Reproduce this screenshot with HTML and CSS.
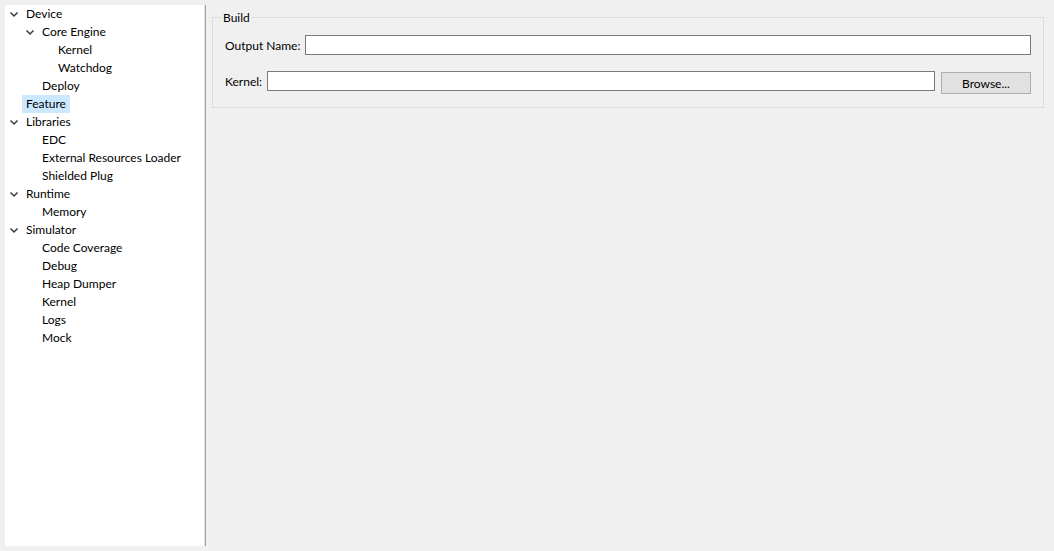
FILE: index.html
```html
<!DOCTYPE html>
<html lang="en">
<head>
    <meta charset="UTF-8">
    <title>Properties</title>
    <link rel="stylesheet" href="styles.css">
</head>
<body>
    <div class="tree-panel">
        <ul class="tree">
            <li>
                <div class="row"><span class="toggle"><svg viewBox="0 0 16 18"><polyline points="4.5,7.5 8,11 11.5,7.5"/></svg></span><span class="label">Device</span></div>
                <ul>
                    <li>
                        <div class="row"><span class="toggle"><svg viewBox="0 0 16 18"><polyline points="4.5,7.5 8,11 11.5,7.5"/></svg></span><span class="label">Core Engine</span></div>
                        <ul>
                            <li><div class="row"><span class="toggle"></span><span class="label">Kernel</span></div></li>
                            <li><div class="row"><span class="toggle"></span><span class="label">Watchdog</span></div></li>
                        </ul>
                    </li>
                    <li><div class="row"><span class="toggle"></span><span class="label">Deploy</span></div></li>
                </ul>
            </li>
            <li><div class="row"><span class="toggle"></span><span class="label selected">Feature</span></div></li>
            <li>
                <div class="row"><span class="toggle"><svg viewBox="0 0 16 18"><polyline points="4.5,7.5 8,11 11.5,7.5"/></svg></span><span class="label">Libraries</span></div>
                <ul>
                    <li><div class="row"><span class="toggle"></span><span class="label">EDC</span></div></li>
                    <li><div class="row"><span class="toggle"></span><span class="label">External Resources Loader</span></div></li>
                    <li><div class="row"><span class="toggle"></span><span class="label">Shielded Plug</span></div></li>
                </ul>
            </li>
            <li>
                <div class="row"><span class="toggle"><svg viewBox="0 0 16 18"><polyline points="4.5,7.5 8,11 11.5,7.5"/></svg></span><span class="label">Runtime</span></div>
                <ul>
                    <li><div class="row"><span class="toggle"></span><span class="label">Memory</span></div></li>
                </ul>
            </li>
            <li>
                <div class="row"><span class="toggle"><svg viewBox="0 0 16 18"><polyline points="4.5,7.5 8,11 11.5,7.5"/></svg></span><span class="label">Simulator</span></div>
                <ul>
                    <li><div class="row"><span class="toggle"></span><span class="label">Code Coverage</span></div></li>
                    <li><div class="row"><span class="toggle"></span><span class="label">Debug</span></div></li>
                    <li><div class="row"><span class="toggle"></span><span class="label">Heap Dumper</span></div></li>
                    <li><div class="row"><span class="toggle"></span><span class="label">Kernel</span></div></li>
                    <li><div class="row"><span class="toggle"></span><span class="label">Logs</span></div></li>
                    <li><div class="row"><span class="toggle"></span><span class="label">Mock</span></div></li>
                </ul>
            </li>
        </ul>
    </div>

    <div class="content">
        <fieldset class="group">
            <legend>Build</legend>
            <div class="field">
                <label for="output-name">Output Name:</label>
                <input type="text" id="output-name" class="text-input">
            </div>
            <div class="field kernel-field">
                <label for="kernel">Kernel:</label>
                <input type="text" id="kernel" class="text-input">
                <button class="btn">Browse...</button>
            </div>
        </fieldset>
    </div>
</body>
</html>
```

FILE: styles.css
```css
html, body {
    margin: 0;
    height: 100%;
}

body {
    font-family: Lato, "Noto Sans", sans-serif;
    font-size: 12px;
    color: #000;
    background: #f0f0f0;
    display: flex;
    overflow: hidden;
}

.tree-panel {
    width: 200px;
    margin: 5px 0 5px 5px;
    background: #fff;
    border-right: 1px solid #a0a0a0;
    box-shadow: inset -1px 0 #e3e3e3;
}

.tree,
.tree ul {
    list-style: none;
    margin: 0;
    padding: 0;
}

.tree {
    padding-left: 1px;
}

.tree ul {
    padding-left: 16px;
}

.row {
    display: flex;
    height: 18px;
}

.toggle {
    width: 16px;
    flex-shrink: 0;
}

.toggle svg {
    display: block;
    width: 16px;
    height: 18px;
    fill: none;
    stroke: #3a3a3a;
    stroke-width: 1.5;
}

.label {
    padding: 0 4px;
    line-height: 18px;
    white-space: nowrap;
}

.label.selected {
    background: #cce8ff;
}

.content {
    flex: 1;
    padding: 9px 10px 0 6px;
}

.group {
    margin: 0;
    padding: 9px 12px 13px 12px;
    border: 1px solid #dcdcdc;
}

.group legend {
    padding: 0 2px;
    margin-left: -4px;
    line-height: 17px;
}

.field {
    display: flex;
    align-items: center;
    gap: 5px;
}

.kernel-field {
    margin-top: 16px;
    align-items: flex-start;
}

.kernel-field label {
    line-height: 22px;
}

.text-input {
    flex: 1;
    height: 20px;
    box-sizing: border-box;
    border: 1px solid #7a7a7a;
    background: #fff;
    margin: 0;
    padding: 0 3px;
    font: inherit;
}

.btn {
    width: 90px;
    height: 22px;
    box-sizing: border-box;
    margin: 1px 0 0 1px;
    border: 1px solid #adadad;
    background: #e1e1e1;
    font: inherit;
    color: #000;
    padding: 0;
}
```
